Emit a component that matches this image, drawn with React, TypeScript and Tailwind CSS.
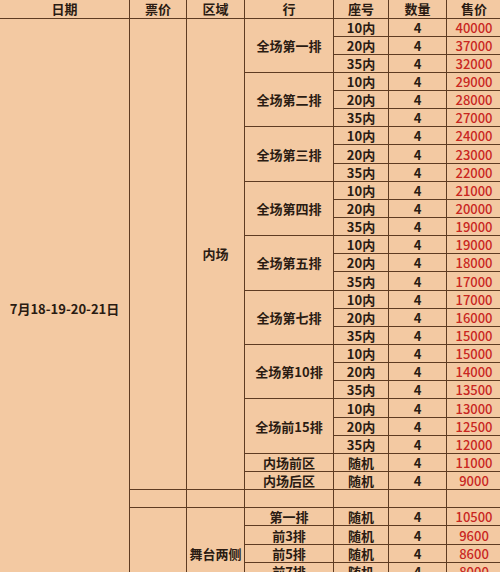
const groups = [
  { row: "全场第一排", prices: ["40000", "37000", "32000"] },
  { row: "全场第二排", prices: ["29000", "28000", "27000"] },
  { row: "全场第三排", prices: ["24000", "23000", "22000"] },
  { row: "全场第四排", prices: ["21000", "20000", "19000"] },
  { row: "全场第五排", prices: ["19000", "18000", "17000"] },
  { row: "全场第七排", prices: ["17000", "16000", "15000"] },
  { row: "全场第10排", prices: ["15000", "14000", "13500"] },
  { row: "全场前15排", prices: ["13000", "12500", "12000"] },
];
const seats = ["10内", "20内", "35内"];

const innerExtra = [
  { row: "内场前区", price: "11000" },
  { row: "内场后区", price: "9000" },
];

const stage = [
  { row: "第一排", price: "10500" },
  { row: "前3排", price: "9600" },
  { row: "前5排", price: "8600" },
  { row: "前7排", price: "8000" },
  { row: "前10排", price: "7500" },
];

const td = "border border-[#5e3b22] text-center align-middle p-0 leading-none";
const tr = "h-[18.15px]";
const price = `${td} text-[#c9261f] font-medium`;

export default function App() {
  return (
    <div
      className="w-[500px] h-[572px] overflow-hidden bg-[#f3c9a2] text-[#2a1b12]"
      style={{ fontFamily: '"Noto Sans CJK SC", "Noto Sans", sans-serif' }}
    >
      <table className="table-fixed border-collapse w-[502px] -ml-px -mt-px text-[13px] font-semibold">
        <colgroup>
          <col className="w-[130px]" />
          <col className="w-[57px]" />
          <col className="w-[58px]" />
          <col className="w-[89px]" />
          <col className="w-[55px]" />
          <col className="w-[58px]" />
          <col className="w-[55px]" />
        </colgroup>
        <thead>
          <tr className="h-[18.5px] font-bold">
            <th className={td}>日期</th>
            <th className={td}>票价</th>
            <th className={td}>区域</th>
            <th className={td}>行</th>
            <th className={td}>座号</th>
            <th className={td}>数量</th>
            <th className={td}>售价</th>
          </tr>
        </thead>
        <tbody>
          {groups.map((g, gi) =>
            g.prices.map((p, i) => (
              <tr key={`${gi}-${i}`} className={tr}>
                {gi === 0 && i === 0 && (
                  <>
                    <td rowSpan={32} className={td}>7月18-19-20-21日</td>
                    <td rowSpan={26} className={td}></td>
                    <td rowSpan={26} className={td}>内场</td>
                  </>
                )}
                {i === 0 && (
                  <td rowSpan={3} className={td}>{g.row}</td>
                )}
                <td className={td}>{seats[i]}</td>
                <td className={td}>4</td>
                <td className={price}>{p}</td>
              </tr>
            ))
          )}
          {innerExtra.map((r) => (
            <tr key={r.row} className={tr}>
              <td className={td}>{r.row}</td>
              <td className={td}>随机</td>
              <td className={td}>4</td>
              <td className={price}>{r.price}</td>
            </tr>
          ))}
          <tr className={tr}>
            <td className={td}></td>
            <td className={td}></td>
            <td className={td}></td>
            <td className={td}></td>
            <td className={td}></td>
            <td className={td}></td>
          </tr>
          {stage.map((r, i) => (
            <tr key={r.row} className={tr}>
              {i === 0 && (
                <>
                  <td rowSpan={5} className={td}></td>
                  <td rowSpan={5} className={td}>舞台两侧</td>
                </>
              )}
              <td className={td}>{r.row}</td>
              <td className={td}>随机</td>
              <td className={td}>4</td>
              <td className={price}>{r.price}</td>
            </tr>
          ))}
        </tbody>
      </table>
    </div>
  );
}
